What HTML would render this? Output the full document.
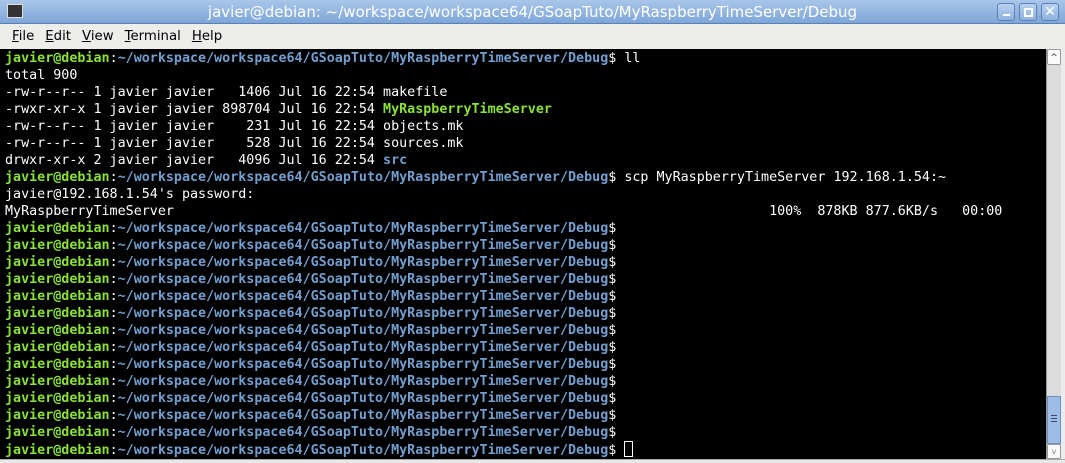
<!DOCTYPE html>
<html><head><style>
*{margin:0;padding:0;box-sizing:border-box}
body{width:1065px;height:463px;overflow:hidden;background:#ececec;font-family:"DejaVu Sans","Liberation Sans",sans-serif;position:relative}
#title{position:absolute;left:0;top:0;width:1065px;height:24px;background:linear-gradient(#a9c6ea,#7ea6d8);border-bottom:1px solid #5a80b5;color:#fff;font-size:15px;text-align:center;line-height:24px}
#menu{position:absolute;left:0;top:24px;width:1065px;height:25px;background:#ededeb;font-size:13.3px;line-height:25px}
#menu span{margin-left:12px;margin-right:-1px}
#term{position:absolute;left:0;top:49px;width:1046px;height:410px;background:#000;color:#fff;font-family:"DejaVu Sans Mono","Liberation Mono",monospace;font-size:13.36px;line-height:17px;padding:1px 0 0 5px;white-space:pre}
.g{color:#8ae234;font-weight:bold}.b{color:#729fcf;font-weight:bold}
#sb{position:absolute;left:1046px;top:49px;width:15px;height:410px;background:#dcdcdc;border-left:1px solid #999}
.btn{position:absolute;width:18px;height:18px;top:3px;border:1px solid #5a80b5;border-radius:3px;background:linear-gradient(#b8d0ef,#8fb2de)}
#bottom{position:absolute;left:0;top:459px;width:1065px;height:4px;background:#e8e8e8;border-top:1px solid #aaa}
</style></head><body>
<div id="title"><div style="position:absolute;left:7px;top:4px;width:16px;height:14px;background:#333;border:1px solid #ddd"></div>javier@debian: ~/workspace/workspace64/GSoapTuto/MyRaspberryTimeServer/Debug
<div class="btn" style="left:997px"><div style="position:absolute;left:5px;top:10px;width:7px;height:2px;background:#fff"></div></div>
<div class="btn" style="left:1019px"><div style="position:absolute;left:4px;top:4px;width:9px;height:9px;border:2px solid #fff"></div></div>
<div class="btn" style="left:1041px;color:#fff;font-size:14px;line-height:16px;font-weight:bold;text-align:center">✕</div>
</div>
<div id="menu"><span><u>F</u>ile</span><span><u>E</u>dit</span><span><u>V</u>iew</span><span><u>T</u>erminal</span><span><u>H</u>elp</span></div>
<div id="term"><span class="g">javier@debian</span>:<span class="b">~/workspace/workspace64/GSoapTuto/MyRaspberryTimeServer/Debug</span>$ ll
total 900
-rw-r--r-- 1 javier javier   1406 Jul 16 22:54 makefile
-rwxr-xr-x 1 javier javier 898704 Jul 16 22:54 <span class="g">MyRaspberryTimeServer</span>
-rw-r--r-- 1 javier javier    231 Jul 16 22:54 objects.mk
-rw-r--r-- 1 javier javier    528 Jul 16 22:54 sources.mk
drwxr-xr-x 2 javier javier   4096 Jul 16 22:54 <span class="b">src</span>
<span class="g">javier@debian</span>:<span class="b">~/workspace/workspace64/GSoapTuto/MyRaspberryTimeServer/Debug</span>$ scp MyRaspberryTimeServer 192.168.1.54:~
javier@192.168.1.54's password: 
MyRaspberryTimeServer                                                                          100%  878KB 877.6KB/s   00:00    
<span class="g">javier@debian</span>:<span class="b">~/workspace/workspace64/GSoapTuto/MyRaspberryTimeServer/Debug</span>$ 
<span class="g">javier@debian</span>:<span class="b">~/workspace/workspace64/GSoapTuto/MyRaspberryTimeServer/Debug</span>$ 
<span class="g">javier@debian</span>:<span class="b">~/workspace/workspace64/GSoapTuto/MyRaspberryTimeServer/Debug</span>$ 
<span class="g">javier@debian</span>:<span class="b">~/workspace/workspace64/GSoapTuto/MyRaspberryTimeServer/Debug</span>$ 
<span class="g">javier@debian</span>:<span class="b">~/workspace/workspace64/GSoapTuto/MyRaspberryTimeServer/Debug</span>$ 
<span class="g">javier@debian</span>:<span class="b">~/workspace/workspace64/GSoapTuto/MyRaspberryTimeServer/Debug</span>$ 
<span class="g">javier@debian</span>:<span class="b">~/workspace/workspace64/GSoapTuto/MyRaspberryTimeServer/Debug</span>$ 
<span class="g">javier@debian</span>:<span class="b">~/workspace/workspace64/GSoapTuto/MyRaspberryTimeServer/Debug</span>$ 
<span class="g">javier@debian</span>:<span class="b">~/workspace/workspace64/GSoapTuto/MyRaspberryTimeServer/Debug</span>$ 
<span class="g">javier@debian</span>:<span class="b">~/workspace/workspace64/GSoapTuto/MyRaspberryTimeServer/Debug</span>$ 
<span class="g">javier@debian</span>:<span class="b">~/workspace/workspace64/GSoapTuto/MyRaspberryTimeServer/Debug</span>$ 
<span class="g">javier@debian</span>:<span class="b">~/workspace/workspace64/GSoapTuto/MyRaspberryTimeServer/Debug</span>$ 
<span class="g">javier@debian</span>:<span class="b">~/workspace/workspace64/GSoapTuto/MyRaspberryTimeServer/Debug</span>$ 
<span class="g">javier@debian</span>:<span class="b">~/workspace/workspace64/GSoapTuto/MyRaspberryTimeServer/Debug</span>$ <span style="display:inline-block;width:9px;height:16px;border:1px solid #fff;vertical-align:-3px"></span></div>
<div id="sb">
<div style="position:absolute;left:0;top:0;width:14px;height:16px;background:#fafafa;border:1px solid #999;border-radius:2px;font-size:9px;text-align:center;line-height:16px;color:#333">^</div>
<div style="position:absolute;left:0;top:347px;width:14px;height:48px;background:#9dbde6;border:1px solid #6a8fc4"><div style="position:absolute;left:3px;top:18px;width:6px;height:7px;border-top:1px solid #446;border-bottom:1px solid #446"></div><div style="position:absolute;left:3px;top:21px;width:6px;height:1px;background:#446"></div></div>
<div style="position:absolute;left:0;top:395px;width:14px;height:15px;background:#fafafa;border:1px solid #999;border-radius:2px;font-size:8px;text-align:center;line-height:14px;color:#888">v</div>
</div>
<div id="bottom"></div>
</body></html>
